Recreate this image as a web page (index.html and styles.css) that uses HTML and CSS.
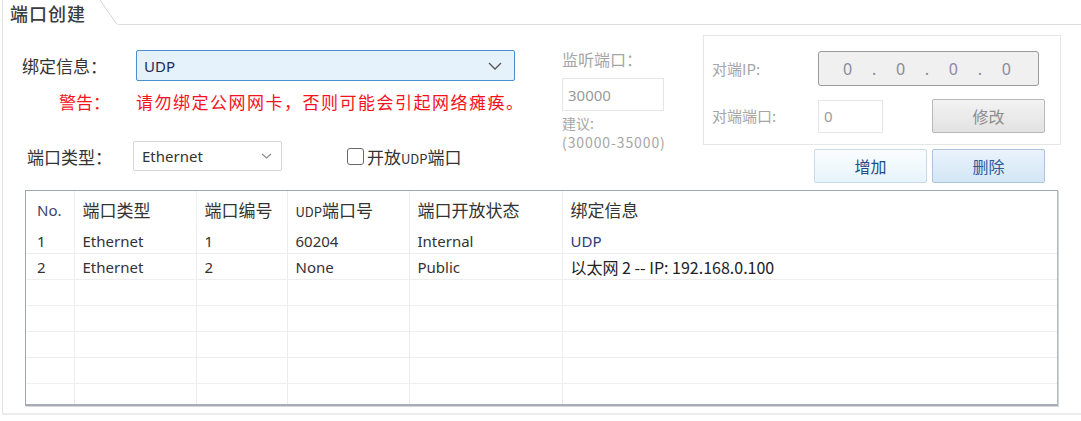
FILE: index.html
```html
<!DOCTYPE html>
<html lang="zh-CN">
<head>
    <meta charset="UTF-8">
    <title>端口创建</title>
    <link rel="stylesheet" href="styles.css">
</head>
<body>
    <!-- 标签页标题 -->
    <div class="tab-bar">
        <div class="tab">端口创建</div>
        <svg class="tab-edge" width="18" height="25" viewBox="0 0 18 25">
            <line x1="0" y1="0" x2="17" y2="24.5" stroke="#d4d4d4" stroke-width="1"/>
        </svg>
        <div class="tab-rest"></div>
    </div>

    <div class="panel">
        <div class="form">
            <!-- 绑定信息与端口类型 -->
            <div class="col-left">
                <div class="row-bind">
                    <span class="label bind-label">绑定信息：</span>
                    <div class="select select-active">
                        <span>UDP</span>
                        <svg width="14" height="8" viewBox="0 0 14 8"><polyline points="1,1 7,7 13,1" fill="none" stroke="#555" stroke-width="1.3"/></svg>
                    </div>
                </div>
                <div class="row-warn">
                    <span class="warn-label">警告：</span>
                    <span class="warn-text">请勿绑定公网网卡，否则可能会引起网络瘫痪。</span>
                </div>
                <div class="row-type">
                    <span class="label type-label">端口类型：</span>
                    <div class="select select-type">
                        <span>Ethernet</span>
                        <svg width="11" height="6" viewBox="0 0 11 6"><polyline points="1,1 5.5,5 10,1" fill="none" stroke="#888" stroke-width="1.1"/></svg>
                    </div>
                    <label class="check">
                        <span class="check-box"></span>
                        <span>开放<span class="small-latin">UDP</span>端口</span>
                    </label>
                </div>
            </div>

            <!-- 监听端口（禁用） -->
            <div class="col-listen">
                <div class="dim">监听端口：</div>
                <div class="input listen-input">30000</div>
                <div class="dim hint">建议:</div>
                <div class="dim hint range">(30000-35000)</div>
            </div>

            <!-- 对端设置 -->
            <div class="col-peer">
                <div class="group">
                    <div class="peer-row">
                        <span class="dim peer-label">对端IP:</span>
                        <div class="ip-box">
                            <span>0</span><span>.</span><span>0</span><span>.</span><span>0</span><span>.</span><span>0</span>
                        </div>
                    </div>
                    <div class="peer-row peer-row-2">
                        <span class="dim peer-label">对端端口:</span>
                        <div class="input peer-input">0</div>
                        <button class="btn btn-disabled">修改</button>
                    </div>
                </div>
                <div class="action-btns">
                    <button class="btn btn-add">增加</button>
                    <button class="btn btn-del">删除</button>
                </div>
            </div>
        </div>

        <!-- 端口列表 -->
        <div class="table-wrap">
            <table class="grid">
                <colgroup>
                    <col style="width: 48px">
                    <col style="width: 122px">
                    <col style="width: 91px">
                    <col style="width: 122px">
                    <col style="width: 153px">
                    <col>
                </colgroup>
                <thead>
                    <tr>
                        <th class="latin">No.</th>
                        <th>端口类型</th>
                        <th>端口编号</th>
                        <th><span class="small-latin">UDP</span>端口号</th>
                        <th>端口开放状态</th>
                        <th>绑定信息</th>
                    </tr>
                </thead>
                <tbody>
                    <tr>
                        <td>1</td><td>Ethernet</td><td>1</td><td>60204</td><td>Internal</td><td class="blue">UDP</td>
                    </tr>
                    <tr>
                        <td>2</td><td>Ethernet</td><td>2</td><td>None</td><td>Public</td><td class="bind-info">以太网 2 -- IP: 192.168.0.100</td>
                    </tr>
                    <tr><td></td><td></td><td></td><td></td><td></td><td></td></tr>
                    <tr><td></td><td></td><td></td><td></td><td></td><td></td></tr>
                    <tr><td></td><td></td><td></td><td></td><td></td><td></td></tr>
                    <tr><td></td><td></td><td></td><td></td><td></td><td></td></tr>
                    <tr><td></td><td></td><td></td><td></td><td></td><td></td></tr>
                    <tr class="last"><td></td><td></td><td></td><td></td><td></td><td></td></tr>
                </tbody>
            </table>
        </div>
    </div>
</body>
</html>
```

FILE: styles.css
```css
/* 基础样式 */
body {
    margin: 0;
    background: #fff;
    color: #333;
    font-family: "Noto Sans", "Noto Sans CJK SC", sans-serif;
    font-size: 15px;
    width: 1081px;
    height: 421px;
    overflow: hidden;
}

/* 标签页 */
.tab-bar {
    display: flex;
    height: 25px;
}

.tab {
    margin-left: 2px;
    width: 98px;
    border-left: 1px solid #e4e4e4;
    box-sizing: border-box;
    padding: 3px 0 0 7px;
    font-family: "Noto Sans CJK SC", sans-serif;
    font-size: 18px;
    font-weight: 500;
    letter-spacing: 1px;
    line-height: 20px;
    color: #3c3c3c;
}

.tab-edge {
    display: block;
    flex-shrink: 0;
}

.tab-rest {
    flex: 1;
    border-bottom: 1px solid #dcdcdc;
}

/* 主面板 */
.panel {
    margin-left: 2px;
    height: 388px;
    border-left: 1px solid #e4e4e4;
    border-bottom: 2px solid #ececec;
}

.form {
    display: flex;
    height: 165px;
}

.label {
    font-family: "Noto Sans CJK SC", sans-serif;
    font-size: 17px;
    color: #333;
}

/* 左侧列 */
.col-left {
    width: 540px;
    padding-top: 25px;
    box-sizing: border-box;
}

.row-bind {
    display: flex;
    align-items: center;
    height: 31px;
}

.bind-label {
    margin-left: 19px;
    width: 114px;
}

.select {
    display: flex;
    align-items: center;
    justify-content: space-between;
    box-sizing: border-box;
    border-radius: 2px;
    font-size: 15px;
}

.select-active {
    width: 379px;
    height: 31px;
    padding: 0 12px 0 7px;
    background: #e5f1fb;
    border: 1.5px solid #4a90d0;
    color: #1e2a5a;
}

.row-warn {
    display: flex;
    margin-top: 10px;
    height: 22px;
    font-family: "Noto Sans CJK SC", sans-serif;
    font-size: 17px;
    line-height: 22px;
    color: #f5141e;
}

.warn-label {
    width: 133px;
    padding-left: 56px;
    box-sizing: border-box;
}

.warn-text {
    letter-spacing: 1.5px;
}

.row-type {
    display: flex;
    align-items: center;
    margin-top: 28px;
    height: 30px;
}

.type-label {
    margin-left: 24px;
    width: 106px;
}

.select-type {
    width: 149px;
    height: 30px;
    padding: 0 9px 0 8px;
    background: #fff;
    border: 1px solid #d6d6d6;
    color: #333;
}

.check {
    display: flex;
    align-items: center;
    margin-left: 65px;
    font-family: "Noto Sans CJK SC", sans-serif;
    font-size: 17px;
    color: #333;
}

.check-box {
    width: 15px;
    height: 15px;
    border: 1px solid #6a6a6a;
    border-radius: 3px;
    margin-right: 3px;
    background: #fff;
}

.small-latin {
    font-size: 13px;
}

/* 监听端口 */
.col-listen {
    margin-left: 19px;
    width: 104px;
    padding-top: 23px;
}

.dim {
    font-family: "Noto Sans CJK SC", sans-serif;
    font-size: 16px;
    line-height: 22px;
    color: #a6a6a6;
}

.input {
    box-sizing: border-box;
    background: #fff;
    border: 1px solid #e6e6e6;
    color: #9a9a9a;
    font-size: 15px;
    padding-left: 5px;
    display: flex;
    align-items: center;
}

.listen-input {
    margin-top: 8px;
    width: 102px;
    height: 33px;
    margin-bottom: 3px;
}

.hint {
    line-height: 19px;
    font-size: 14px;
}

.hint.range {
    letter-spacing: 0.9px;
    white-space: nowrap;
}

/* 对端设置 */
.col-peer {
    margin-left: 37px;
    padding-top: 10px;
}

.group {
    width: 358px;
    height: 110px;
    box-sizing: border-box;
    border: 1px solid #e6e6e6;
    padding: 15px 0 0 8px;
}

.peer-row {
    display: flex;
    align-items: center;
}

.peer-row-2 {
    margin-top: 13px;
}

.peer-label {
    width: 106px;
    font-size: 15px;
}

.ip-box {
    width: 221px;
    height: 35px;
    box-sizing: border-box;
    background: #f0f0f0;
    border: 1px solid #9a9a9a;
    border-radius: 3px;
    display: flex;
    align-items: center;
    justify-content: space-between;
    padding: 0 27px 0 24px;
    color: #8a8a9e;
    font-size: 16px;
}

.peer-input {
    width: 65px;
    height: 33px;
}

.btn {
    box-sizing: border-box;
    width: 113px;
    height: 34px;
    border-radius: 2px;
    font-family: "Noto Sans CJK SC", sans-serif;
    font-size: 16px;
    padding: 0;
}

.btn-disabled {
    margin-left: 49px;
    background: linear-gradient(#f3f3f3, #e2e2e2);
    border: 1px solid #b9b9b9;
    color: #8e8e8e;
}

.action-btns {
    display: flex;
    gap: 5px;
    margin: 4px 0 0 111px;
}

.btn-add {
    background: linear-gradient(#fbfdff, #e6f4fb);
    border: 1px solid #c8dbe8;
    color: #1d4d86;
}

.btn-del {
    background: linear-gradient(#eaf3fb, #d3e6f5);
    border: 1px solid #a9c4dc;
    color: #2b5b9c;
}

/* 列表 */
.table-wrap {
    margin-left: 22px;
    width: 1033px;
    height: 216px;
    box-sizing: border-box;
    border: 1px solid #a2a7ad;
    border-right-color: #b4b8bd;
    border-bottom: 2px solid #a8adb3;
    box-shadow: 1px 1px 0 #d4d7da;
    overflow: hidden;
}

.grid {
    width: 100%;
    border-collapse: collapse;
    table-layout: fixed;
}

.grid th {
    height: 37px;
    padding: 0 0 0 8px;
    text-align: left;
    font-family: "Noto Sans CJK SC", sans-serif;
    font-weight: normal;
    font-size: 17px;
    color: #333;
    border-left: 1px solid #eeeeee;
}

.grid th.latin {
    font-family: "Noto Sans", sans-serif;
    font-size: 15px;
    color: #3a4470;
}

.grid th:first-child,
.grid td:first-child {
    border-left: none;
    padding-left: 11px;
}

.grid td {
    height: 25px;
    padding: 0 0 0 8px;
    font-size: 15px;
    line-height: 18px;
    color: #333;
    border-left: 1px solid #ededed;
    border-bottom: 1px solid #eeeeee;
    white-space: nowrap;
}

.grid tr.last td {
    border-bottom: none;
}

.grid td.blue {
    color: #2e3a7a;
}

.grid td.bind-info {
    font-family: "Noto Sans CJK SC", sans-serif;
    font-size: 16px;
    color: #222;
}
```
